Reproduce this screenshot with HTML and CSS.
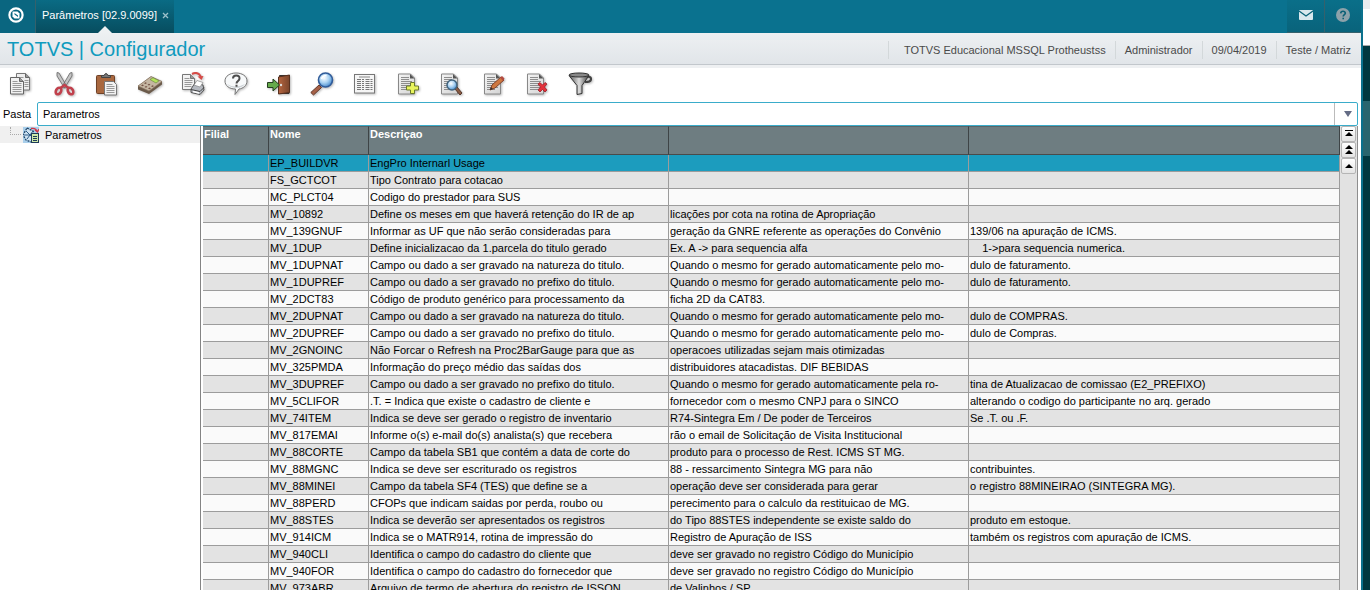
FILE: index.html
```html
<!DOCTYPE html>
<html lang="pt-BR">
<head>
<meta charset="utf-8">
<title>TOTVS | Configurador</title>
<link rel="stylesheet" href="styles.css">
</head>
<body>
<svg class="defs" aria-hidden="true">
  <defs>
    <linearGradient id="paper" x1="0" y1="0" x2="1" y2="1"><stop offset="0" stop-color="#f4f4f4"/><stop offset="1" stop-color="#d4d4d4"/></linearGradient>
    <linearGradient id="wood" x1="0" y1="0" x2="1" y2="0"><stop offset="0" stop-color="#b5653f"/><stop offset="1" stop-color="#7a452c"/></linearGradient>
    <linearGradient id="metal" x1="0" y1="0" x2="1" y2="0"><stop offset="0" stop-color="#555"/><stop offset=".5" stop-color="#ddd"/><stop offset="1" stop-color="#3a3a3a"/></linearGradient>
    <radialGradient id="glass" cx=".4" cy=".35" r=".7"><stop offset="0" stop-color="#fff"/><stop offset=".5" stop-color="#a9d2f2"/><stop offset="1" stop-color="#3c82c8"/></radialGradient>
    <symbol id="sheet" viewBox="0 0 24 24">
      <path d="M2.500 2h12l4 4v16h-16z" fill="url(#paper)" stroke="#888"/>
      <path d="M14 2v4.500h4.500z" fill="#555"/>
      <path d="M5 5.500h8M5 7.500h8M5 9.500h11M5 11.500h11M5 13.500h11M5 15.500h11M5 17.500h8" stroke="#8d8d8d" stroke-width="1"/>
    </symbol>
  </defs>
</svg>
<div class="window">
  <div class="app">
    <header class="topbar">
      <button class="logo" aria-label="Início">
        <svg width="16" height="16" viewBox="0 0 16 16"><circle cx="8" cy="8" r="6.600" fill="none" stroke="#fff" stroke-width="2.200"/><path d="M4.500 4.500h5l2 2v5h-5l-2-2z" fill="#fff"/><path d="M6.500 6l3.500 2.500v1.500L6.500 7.500z" fill="#0b6982"/></svg>
      </button>
      <div class="tab">
        <span>Parâmetros [02.9.0099]</span>
        <button class="close" aria-label="Fechar"><svg width="7" height="7" viewBox="0 0 7 7"><path d="M1 1l5 5M6 1L1 6" stroke="#9cc0ca" stroke-width="1.300"/></svg></button>
      </div>
      <div class="top-actions">
        <button class="action" aria-label="Mensagens"><svg width="14" height="10" viewBox="0 0 14 10"><rect width="14" height="10" rx="1" fill="#d9e8ed"/><path d="M0 1l7 5 7-5" fill="none" stroke="#0b6378" stroke-width="1.400"/></svg></button>
        <button class="action" aria-label="Ajuda"><svg width="14" height="14" viewBox="0 0 14 14"><circle cx="7" cy="7" r="7" fill="#8da2aa"/><path d="M4.700 5.300Q4.900 3.300 7 3.300T9.300 5.200C9.300 6.600 7.200 6.700 7.200 8.500M7.200 9.700v1.600" fill="none" stroke="#0b6075" stroke-width="1.600"/></svg></button>
      </div>
    </header>
    <div class="titlebar">
      <h1>TOTVS | Configurador</h1>
      <ul class="info"><li>TOTVS Educacional MSSQL Protheustss</li><li>Administrador</li><li>09/04/2019</li><li>Teste / Matriz</li></ul>
    </div>
    <div class="toolbar">
      <button aria-label="Copiar"><svg viewBox="0 0 24 24"><path d="M7.500 1.500h9l4 4v12.500h-13z" fill="#eee" stroke="#777"/><path d="M16.500 1.500v4h4" fill="#999" stroke="#666"/><path d="M9.500 5.500h5M15.500 8.500h4M15.500 10.500h4M15.500 12.500h4M15.500 14.500h4" stroke="#999"/><path d="M1.500 5.500h9l4 4v12.500h-13z" fill="#f1f1f1" stroke="#666"/><path d="M10.500 5.500v4h4" fill="#999" stroke="#666"/><path d="M3.500 9.500h5M3.500 11.500h9M3.500 13.500h9M3.500 15.500h9M3.500 17.500h9M3.500 19.500h9" stroke="#999"/></svg></button>
      <button aria-label="Recortar"><svg viewBox="0 0 24 24"><path d="M5 .5l2 .5 8.500 14.500-3 .5L5 4zM20 .5l-2 .5-8.500 14.500 3 .5L20 4z" fill="#c4c4c4" stroke="#666" stroke-width=".8"/><g fill="none" stroke="#c1404c" stroke-width="2.600"><ellipse cx="6.500" cy="19" rx="2.500" ry="3.500" transform="rotate(30 6.500 19)"/><ellipse cx="18.500" cy="19" rx="2.500" ry="3.500" transform="rotate(-30 18.500 19)"/><path d="M8.500 16l4-3 4 3"/></g></svg></button>
      <button aria-label="Colar"><svg viewBox="0 0 24 24"><rect x="1.500" y="3.500" width="18" height="18" rx="1" fill="#a9683f" stroke="#6f4127"/><path d="M6.500 5.500v-2h2.500q2-4 4 0h2.500v2z" fill="#777" stroke="#444"/><path d="M9.500 9.500h9l3 3v10.500h-12z" fill="#f2f2f2" stroke="#777"/><path d="M11.500 12.500h6M11.500 14.500h8M11.500 16.500h8M11.500 18.500h8M11.500 20.500h8" stroke="#999"/></svg></button>
      <button aria-label="Calculadora"><svg viewBox="0 0 24 24"><path d="M0 14L13 4.500l11 5v3L11 22 0 17.500z" fill="#6b5a4a"/><path d="M0 14L13 4.500l11 5L11 19z" fill="#c4b6a2" stroke="#8a7763" stroke-width=".7"/><path d="M12 7.500l3-1.700 6 3-3 2.200z" fill="#b4e35c" stroke="#66843a" stroke-width=".6"/><g fill="#755446"><path d="M3 13.500l1.500-1 1.500.7-1.500 1zM6.500 15l1.500-1 1.500.7-1.500 1zM10 16.500l1.500-1 1.500.7-1.500 1zM6 11.300l1.500-1 1.500.7-1.500 1zM9.500 12.800l1.500-1 1.500.7-1.500 1zM13 14.300l1.500-1 1.500.7-1.500 1z"/></g></svg></button>
      <button aria-label="Imprimir"><svg viewBox="0 0 24 24"><path d="M1.500 2.500h8l4 4v11h-12z" fill="#f2f2f2" stroke="#777"/><path d="M9.500 2.500v4h4" fill="#999" stroke="#777"/><path d="M3.500 6.500h5M3.500 8.500h8M3.500 10.500h8M3.500 12.500h7M3.500 14.500h7" stroke="#999"/><path d="M11 2Q17-1 20 5" fill="none" stroke="#d64c48" stroke-width="2"/><path d="M16.500 4.500l6-.5-2 4z" fill="#d64c48"/><path d="M10 17l4-6 8 2 1 5-4 4.500-9-2z" fill="#b5b9c0" stroke="#555"/><path d="M13 13l3-4.500 6 2-3 4.500z" fill="#fff" stroke="#777" stroke-width=".6"/><path d="M10 17.500l9 2 4-4" fill="none" stroke="#444"/><path d="M12 19.500l6 1.500" stroke="#fff" stroke-width="1.500"/></svg></button>
      <button aria-label="Ajuda da rotina"><svg viewBox="0 0 24 24"><path d="M12 1C18 1 23 4 23 9 23 13.500 19 16.500 15 17L11 22.500l.5-5.500C5 17 1 13.500 1 9 1 4 6 1 12 1z" fill="#f7f9fa" stroke="#777"/><path d="M3 12q8 5 18 0-3 4-9 4-6-.5-9-4z" fill="#ccd2d6"/><path d="M9 6.500Q9 3.500 12.300 3.500T15.500 6.500C15.500 9 12.500 9 12.500 11.500M12.500 12.700v2" fill="none" stroke="#4c4c4c" stroke-width="2"/></svg></button>
      <button aria-label="Sair"><svg viewBox="0 0 24 24"><path d="M12.500 3.500h9.500v18h-9.500z" fill="#4b2c22" stroke="#333"/><path d="M11.500 5l11-2v17.500l-11 1.500z" fill="url(#wood)" stroke="#57301f"/><circle cx="14" cy="13" r="1.200" fill="#ddd"/><path d="M.5 10.500h5.500v-3.500l6.500 6-6.500 6v-3.500H.5z" fill="#65aa4b" stroke="#253f20"/></svg></button>
      <button aria-label="Pesquisar"><svg viewBox="0 0 24 24"><path d="M9 13l2.500 2.500-8 7.500L.8 20.500z" fill="#a66046" stroke="#633a2c"/><circle cx="15.500" cy="8" r="7" fill="url(#glass)" stroke="#315c9a" stroke-width="1.600"/><path d="M11.500 7q1-3.500 5-3.500" stroke="#fff" stroke-width="1.500" fill="none"/></svg></button>
      <button aria-label="Lista"><svg viewBox="0 0 24 24"><rect x="1.500" y="2.500" width="20" height="18.500" fill="#f5f5f5" stroke="#777"/><path d="M6 5h11" stroke="#888"/><path d="M4 7.500h7M12.500 7.500h7M4 9.500h7M12.500 9.500h7M4 11.500h7M12.500 11.500h7M4 13.500h7M12.500 13.500h7M4 15.500h7M12.500 15.500h7M4 17.500h7M12.500 17.500h7" stroke="#777" stroke-dasharray="4 1"/></svg></button>
      <button aria-label="Incluir"><svg viewBox="0 0 24 24"><use href="#sheet"/><path d="M14.500 10.500h4v3.500h4v4h-4v3.500h-4v-3.500h-4v-4h4z" fill="#e8f45c" stroke="#6b792c"/></svg></button>
      <button aria-label="Visualizar"><svg viewBox="0 0 24 24"><use href="#sheet"/><path d="M16 17l2-2 5 6-2 2z" fill="#8a5b43" stroke="#57392d"/><circle cx="13" cy="13" r="5" fill="url(#glass)" stroke="#42647d" stroke-width="1.500"/></svg></button>
      <button aria-label="Alterar"><svg viewBox="0 0 24 24"><use href="#sheet"/><path d="M8 18l2-5 9-8 3 3-9 8z" fill="#ce7840" stroke="#80422a"/><path d="M18 5.500L20 4l2.500 2.500L21 9z" fill="#b34b40"/><path d="M8 18l1-3 2 2z" fill="#333"/></svg></button>
      <button aria-label="Excluir"><svg viewBox="0 0 24 24"><use href="#sheet"/><path d="M13 12l2-1.500 2.500 2.500 2.500-2.500 2 1.500-2.500 3 2.500 3-2 2-2.500-2.500-2.500 2.500-2-2 2.500-3z" fill="#e4313a" stroke="#982128" stroke-width=".8"/></svg></button>
      <button aria-label="Filtrar"><svg viewBox="0 0 24 24"><path d="M18 5q5-1 5 2T17 10" fill="none" stroke="#444" stroke-width="2.200"/><path d="M1 3.500l8 10v9l5-1v-8l7-10z" fill="url(#metal)" stroke="#333"/><ellipse cx="11" cy="3" rx="10" ry="2" fill="#888" stroke="#333"/></svg></button>
    </div>
    <div class="folder">
      <label for="pasta">Pasta</label>
      <div class="combo">
        <select id="pasta"><option>Parametros</option></select>
        <span class="arrow"></span>
      </div>
    </div>
    <main class="content">
      <nav class="tree">
        <div class="node">
          <span class="branch"></span>
          <svg width="16" height="16" viewBox="0 0 16 16"><rect width="16" height="16" fill="#a9cfeb"/><path d="M4 1l6 3 2 5-4 6-5-2-3-5z" fill="#cfe3f2" stroke="#1f4468" stroke-width="1.300" stroke-dasharray="2 1"/><path d="M3 4l7 7M10 4l-6 8M1 8h10" stroke="#2d5b86"/><path d="M8 1.500q5-1 6 3M12 3l2.500 2L16 2" fill="none" stroke="#d43545" stroke-width="1.300"/><rect x="8.500" y="6.500" width="7" height="9" fill="#cde8a9" stroke="#1e3b58"/><path d="M10 9.500h4M10 11.500h4M10 13.500h4" stroke="#1e3b58"/></svg>
          <span>Parametros</span>
        </div>
      </nav>
      <div class="grid">
        <table>
          <colgroup><col class="c-filial"><col class="c-nome"><col class="c-desc"><col class="c-desc"><col></colgroup>
          <thead><tr><th>Filial</th><th>Nome</th><th>Descriçao</th><th></th><th></th></tr></thead>
          <tbody>
            <tr class="selected"><td></td><td>EP_BUILDVR</td><td>EngPro Internarl Usage</td><td></td><td></td></tr>
            <tr><td></td><td>FS_GCTCOT</td><td>Tipo Contrato para cotacao</td><td></td><td></td></tr>
            <tr><td></td><td>MC_PLCT04</td><td>Codigo do prestador para SUS</td><td></td><td></td></tr>
            <tr><td></td><td>MV_10892</td><td>Define os meses em que haverá retenção do IR de ap</td><td>licações por cota na rotina de Apropriação</td><td></td></tr>
            <tr><td></td><td>MV_139GNUF</td><td>Informar as UF que não serão consideradas para</td><td>geração da GNRE referente as operações do Convênio</td><td>139/06 na apuração de ICMS.</td></tr>
            <tr><td></td><td>MV_1DUP</td><td>Define inicializacao da 1.parcela do titulo gerado</td><td>Ex. A -&gt; para sequencia alfa</td><td>    1-&gt;para sequencia numerica.</td></tr>
            <tr><td></td><td>MV_1DUPNAT</td><td>Campo ou dado a ser gravado na natureza do titulo.</td><td>Quando o mesmo for gerado automaticamente pelo mo-</td><td>dulo de faturamento.</td></tr>
            <tr><td></td><td>MV_1DUPREF</td><td>Campo ou dado a ser gravado no prefixo do titulo.</td><td>Quando o mesmo for gerado automaticamente pelo mo-</td><td>dulo de faturamento.</td></tr>
            <tr><td></td><td>MV_2DCT83</td><td>Código de produto genérico para processamento da</td><td>ficha 2D da CAT83.</td><td></td></tr>
            <tr><td></td><td>MV_2DUPNAT</td><td>Campo ou dado a ser gravado na natureza do titulo.</td><td>Quando o mesmo for gerado automaticamente pelo mo-</td><td>dulo de COMPRAS.</td></tr>
            <tr><td></td><td>MV_2DUPREF</td><td>Campo ou dado a ser gravado no prefixo do titulo.</td><td>Quando o mesmo for gerado automaticamente pelo mo-</td><td>dulo de Compras.</td></tr>
            <tr><td></td><td>MV_2GNOINC</td><td>Não Forcar o Refresh na Proc2BarGauge para que as</td><td>operacoes utilizadas sejam mais otimizadas</td><td></td></tr>
            <tr><td></td><td>MV_325PMDA</td><td>Informação do preço médio das saídas dos</td><td>distribuidores atacadistas. DIF BEBIDAS</td><td></td></tr>
            <tr><td></td><td>MV_3DUPREF</td><td>Campo ou dado a ser gravado no prefixo do titulo.</td><td>Quando o mesmo for gerado automaticamente pela ro-</td><td>tina de Atualizacao de comissao (E2_PREFIXO)</td></tr>
            <tr><td></td><td>MV_5CLIFOR</td><td>.T. = Indica que existe o cadastro de cliente e</td><td>fornecedor com o mesmo CNPJ para o SINCO</td><td>alterando o codigo do participante no arq. gerado</td></tr>
            <tr><td></td><td>MV_74ITEM</td><td>Indica se deve ser gerado o registro de inventario</td><td>R74-Sintegra Em / De poder de Terceiros</td><td>Se .T. ou .F.</td></tr>
            <tr><td></td><td>MV_817EMAI</td><td>Informe o(s) e-mail do(s) analista(s) que recebera</td><td>rão o email de Solicitação de Visita Institucional</td><td></td></tr>
            <tr><td></td><td>MV_88CORTE</td><td>Campo da tabela SB1 que contém a data de corte do</td><td>produto para o processo de Rest. ICMS ST MG.</td><td></td></tr>
            <tr><td></td><td>MV_88MGNC</td><td>Indica se deve ser escriturado os registros</td><td>88 - ressarcimento Sintegra MG para não</td><td>contribuintes.</td></tr>
            <tr><td></td><td>MV_88MINEI</td><td>Campo da tabela SF4 (TES) que define se a</td><td>operação deve ser considerada para gerar</td><td>o registro 88MINEIRAO (SINTEGRA MG).</td></tr>
            <tr><td></td><td>MV_88PERD</td><td>CFOPs que indicam saidas por perda, roubo ou</td><td>perecimento para o calculo da restituicao de MG.</td><td></td></tr>
            <tr><td></td><td>MV_88STES</td><td>Indica se deverão ser apresentados os registros</td><td>do Tipo 88STES independente se existe saldo do</td><td>produto em estoque.</td></tr>
            <tr><td></td><td>MV_914ICM</td><td>Indica se o MATR914, rotina de impressão do</td><td>Registro de Apuração de ISS</td><td>também os registros com apuração de ICMS.</td></tr>
            <tr><td></td><td>MV_940CLI</td><td>Identifica o campo do cadastro do cliente que</td><td>deve ser gravado no registro Código do Município</td><td></td></tr>
            <tr><td></td><td>MV_940FOR</td><td>Identifica o campo do cadastro do fornecedor que</td><td>deve ser gravado no registro Código do Município</td><td></td></tr>
            <tr><td></td><td>MV_973ABR</td><td>Arquivo de termo de abertura do registro de ISSQN</td><td>de Valinhos / SP</td><td></td></tr>
          </tbody>
        </table>
      </div>
      <div class="scroll">
        <button aria-label="Primeiro registro"><svg width="8" height="10" viewBox="0 0 8 10"><path d="M0 1h8v1H0zM4 3l4 4H0z"/></svg></button>
        <button aria-label="Página anterior"><svg width="8" height="10" viewBox="0 0 8 10"><path d="M4 0l4 4H0zM4 5l4 4H0z"/></svg></button>
        <button aria-label="Linha anterior"><svg width="8" height="10" viewBox="0 0 8 10"><path d="M4 3l4 4H0z"/></svg></button>
      </div>
    </main>
  </div>
  <div class="backdrop"><span class="b-top"></span><span class="b-white"></span><span class="b-dark"></span><span class="b-light"></span></div>
</div>
</body>
</html>
```
FILE: styles.css
```css
* { box-sizing: border-box; }
body {
  margin: 0;
  font: 11px/16px "Liberation Sans", Arial, sans-serif;
  color: #000;
  background: #fff;
}
button { margin: 0; padding: 0; border: 0; background: none; font: inherit; }
svg { display: block; }
.defs { position: absolute; width: 0; height: 0; }
.window { display: flex; height: 100vh; overflow: hidden; }
.app {
  flex: 1;
  min-width: 0;
  display: flex;
  flex-direction: column;
  border-right: 2px solid #0a718d;
}

.topbar { display: flex; flex: none; height: 33px; background: #0a728f; }
.logo {
  width: 36px;
  padding: 0 0 3px 8px;
  background: #0a6680;
  border-right: 1px solid #35616c;
}
.tab {
  position: relative;
  display: flex;
  align-items: center;
  gap: 5px;
  padding: 0 5px 3px 6px;
  color: #fff;
  background: linear-gradient(#0a6b84, #074d5f);
}
.tab::after {
  content: "";
  position: absolute;
  left: 50%;
  bottom: 0;
  margin-left: -7px;
  border: 7px solid transparent;
  border-top: 0;
  border-bottom-color: #eef1f3;
}
.top-actions { display: flex; margin-left: auto; }
.action {
  display: flex;
  align-items: center;
  justify-content: center;
  width: 37px;
  padding-bottom: 3px;
  background: linear-gradient(#0a6f89, #09637b);
  border-bottom: 1px solid #35616c;
}
.action + .action { border-left: 1px solid #35616c; }

.titlebar {
  display: flex;
  flex: none;
  align-items: center;
  justify-content: space-between;
  height: 32px;
  padding-left: 7px;
  background: linear-gradient(#edf0f2, #e1e5e9);
  border-bottom: 1px solid #c2c7cc;
}
h1 { margin: 0; font-size: 20px; font-weight: 400; line-height: 32px; color: #0f9bbe; }
.info { display: flex; margin: 0; padding: 2px 1px 0 0; list-style: none; color: #4a4a4a; }
.info li { padding: 0 9px; border-left: 1px solid #d3d8da; line-height: 18px; }
.info li:first-child { padding-left: 15px; }

.toolbar {
  display: flex;
  flex: none;
  gap: 19px;
  height: 37px;
  padding: 4px 9px 0;
  border-top: 3px solid #eef0f2;
}
.toolbar button, .toolbar svg { width: 24px; height: 24px; }
.toolbar svg { filter: drop-shadow(1px 1px 1px #bbb); }

.folder { display: flex; flex: none; align-items: center; height: 24px; padding: 0 3px; }
.folder label { width: 34px; }
.combo { position: relative; display: flex; flex: 1; }
select {
  flex: 1;
  height: 24px;
  padding: 0 5px;
  font: inherit;
  color: #000;
  background: #fff;
  border: 1px solid #3aacca;
  border-radius: 2px;
  appearance: none;
}
.arrow {
  position: absolute;
  top: 1px;
  right: 1px;
  bottom: 1px;
  width: 23px;
  border-left: 1px solid #bbb;
  pointer-events: none;
}
.arrow::after {
  content: "";
  position: absolute;
  top: 8px;
  left: 9px;
  border: 4px solid transparent;
  border-top: 6px solid #646c85;
  border-bottom: 0;
}

.content { display: flex; flex: 1; min-height: 0; padding-right: 3px; }
.tree { flex: none; width: 201px; border-right: 1px solid #848484; }
.node { display: flex; align-items: center; height: 17px; padding-left: 10px; background: #f0f0f0; }
.node svg { margin: 0 6px 0 2px; }
.branch { width: 11px; height: 8px; margin-bottom: 8px; border: dotted #aaa; border-width: 0 0 1px 1px; }
.grid { flex: 1; min-width: 0; margin-left: 2px; overflow: hidden; }
table { width: 100%; table-layout: fixed; border-collapse: separate; border-spacing: 0; }
.c-filial { width: 66px; }
.c-nome { width: 100px; }
.c-desc { width: 300px; }
th {
  height: 29px;
  padding: 0 1px;
  font-weight: 700;
  line-height: 14px;
  text-align: left;
  vertical-align: top;
  color: #fff;
  background: #6e7d81;
  border-top: 1px solid #596568;
  border-right: 1px solid #3e4446;
  border-bottom: 1px solid #4a4a4a;
}
td {
  height: 17px;
  padding: 0 1px;
  white-space: pre;
  overflow: hidden;
  background: #e3e3e3;
  border-right: 1px solid #9c9c9c;
  border-bottom: 1px solid #9c9c9c;
}
tbody tr:nth-child(odd) td { background: #fafafa; }
tbody tr.selected td { background: #1c9cbe; }
.scroll {
  display: flex;
  flex: none;
  flex-direction: column;
  width: 18px;
  padding: 0 1px;
  background: #e2e2e2;
  border-right: 1px solid #8e8e8e;
}
.scroll button {
  display: flex;
  align-items: center;
  justify-content: center;
  height: 16px;
  background: linear-gradient(#fff, #e4e4e4);
  border: 1px solid #b5b5b5;
  border-radius: 2px;
}

.backdrop { display: flex; flex: none; flex-direction: column; width: 7px; background: #003840; }
.b-top { height: 9px; background: #e9ecef; }
.b-white { height: 37px; background: #fff; border-bottom: 1px solid #aaa; }
.b-dark { height: 55px; }
.b-light { height: 55px; background: #29656e; }
```
